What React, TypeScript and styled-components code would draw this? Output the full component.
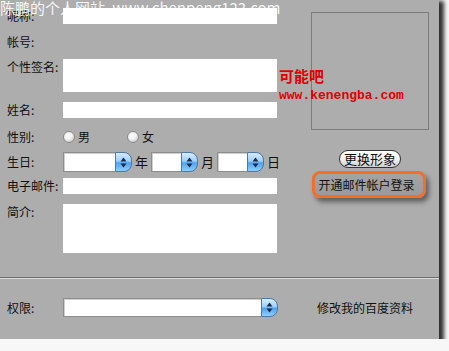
import styled, { createGlobalStyle } from 'styled-components';

const Global = createGlobalStyle`
  body {
    margin: 0;
    background: #f7f7f7;
  }
`;

const ArrowIcon = () => (
  <svg width="7" height="11" viewBox="0 0 7 11">
    <path d="M3.5 0.5 L6.5 4.5 H0.5 Z M3.5 10.5 L0.5 6.5 H6.5 Z" fill="#1a2a4a" />
  </svg>
);

const Select = ({ width, height }: { width: number; height: number }) => (
  <SelectBox style={{ width, height }}>
    <SelectField />
    <SelectButton>
      <ArrowIcon />
    </SelectButton>
  </SelectBox>
);

export default function App() {
  return (
    <>
      <Global />
      <Frame>
        <Watermark>陈鹏的个人网站 www.chenpeng123.com</Watermark>
        <Stamp>
          <StampTitle>可能吧</StampTitle>
          <StampUrl>www.kenengba.com</StampUrl>
        </Stamp>
        <Top>
          <Form>
            <Row $top={0}>
              <Label>昵称:</Label>
              <Field $h={16} />
            </Row>
            <Row $top={10}>
              <Label>帐号:</Label>
            </Row>
            <Row $top={9} $start>
              <Label>个性签名:</Label>
              <Field $h={33} />
            </Row>
            <Row $top={10}>
              <Label>姓名:</Label>
              <Field $h={16} />
            </Row>
            <Row $top={11}>
              <Label>性别:</Label>
              <Choice>
                <Radio />男
              </Choice>
              <Choice $gap={37}>
                <Radio />女
              </Choice>
            </Row>
            <Row $top={7}>
              <Label>生日:</Label>
              <Select width={69} height={20} />
              <Unit>年</Unit>
              <Select width={47} height={20} />
              <Unit>月</Unit>
              <Select width={47} height={20} />
              <Unit>日</Unit>
            </Row>
            <Row $top={6}>
              <Label>电子邮件:</Label>
              <Field $h={16} />
            </Row>
            <Row $top={10} $start>
              <Label>简介:</Label>
              <Field $h={49} />
            </Row>
          </Form>
          <Side>
            <AvatarBox />
            <PillButton>更换形象</PillButton>
            <Highlight>开通邮件帐户登录</Highlight>
          </Side>
        </Top>
        <Separator />
        <Bottom>
          <Label>权限:</Label>
          <Select width={215} height={19} />
          <EditLink>修改我的百度资料</EditLink>
        </Bottom>
      </Frame>
    </>
  );
}

const Frame = styled.div`
  position: relative;
  width: 439px;
  height: 339px;
  background: #adadad;
  box-shadow: 3px 3px 4px 2px rgba(0, 0, 0, 0.8);
  display: flex;
  flex-direction: column;
  font: 12px 'Noto Sans CJK SC', sans-serif;
  color: #111;
`;

const Watermark = styled.div`
  position: absolute;
  left: 0;
  top: -3px;
  z-index: 2;
  font: 15px 'Noto Sans CJK SC', sans-serif;
  color: rgba(255, 255, 255, 0.92);
  white-space: nowrap;
  word-spacing: 4px;
`;

const Stamp = styled.div`
  position: absolute;
  left: 279px;
  top: 66px;
  z-index: 2;
  color: #e00000;
`;

const StampTitle = styled.div`
  font: bold 15px 'Noto Sans CJK SC', serif;
  line-height: 20px;
`;

const StampUrl = styled.div`
  margin-top: 3px;
  font: bold 13px 'Liberation Mono', monospace;
  line-height: 14px;
`;

const Top = styled.div`
  display: flex;
  height: 277px;
`;

const Form = styled.div`
  width: 277px;
  padding-top: 8px;
  display: flex;
  flex-direction: column;
`;

const Row = styled.div<{ $top: number; $start?: boolean }>`
  display: flex;
  align-items: ${(p) => (p.$start ? 'flex-start' : 'center')};
  margin-top: ${(p) => p.$top}px;
  min-height: 16px;
`;

const Label = styled.div`
  flex: none;
  width: 63px;
  padding-left: 7px;
  box-sizing: border-box;
  line-height: 16px;
  white-space: nowrap;
`;

const Field = styled.div<{ $h: number }>`
  width: 214px;
  height: ${(p) => p.$h}px;
  background: #fff;
`;

const Choice = styled.div<{ $gap?: number }>`
  display: flex;
  align-items: center;
  gap: 3px;
  margin-left: ${(p) => p.$gap ?? 0}px;
  line-height: 16px;
`;

const Radio = styled.span`
  width: 12px;
  height: 12px;
  border-radius: 50%;
  box-sizing: border-box;
  border: 1px solid #8a8a8a;
  background: radial-gradient(circle at 40% 35%, #ffffff 0%, #eeeeee 45%, #b8b8b8 100%);
`;

const SelectBox = styled.div`
  display: flex;
  flex: none;
`;

const SelectField = styled.div`
  flex: 1;
  background: #fff;
  border: 1px solid #8d8d8d;
  border-right: none;
  box-shadow: inset 1px 1px 0 #d0d0d0;
`;

const SelectButton = styled.div`
  width: 15px;
  display: flex;
  align-items: center;
  justify-content: center;
  border: 1px solid #4a78b0;
  border-radius: 0 8px 8px 0;
  background: linear-gradient(180deg, #d6ecff 0%, #9cd0fb 45%, #4fa2ee 55%, #8cd0ff 100%);
`;

const Unit = styled.span`
  margin: 0 3px 0 3px;
  font-size: 13px;
  line-height: 16px;
`;

const Side = styled.div`
  width: 118px;
  margin-left: 34px;
  padding-top: 12px;
  display: flex;
  flex-direction: column;
  align-items: center;
`;

const AvatarBox = styled.div`
  width: 118px;
  height: 118px;
  box-sizing: border-box;
  border: 1px solid #7c7c7c;
`;

const PillButton = styled.div`
  margin-top: 20px;
  width: 62px;
  height: 18px;
  box-sizing: border-box;
  border: 1.5px solid #333;
  border-radius: 9px;
  background: linear-gradient(180deg, #ffffff 0%, #f2f2f2 50%, #cfcfcf 100%);
  display: flex;
  align-items: center;
  justify-content: center;
  font-size: 13px;
  line-height: 16px;
`;

const Highlight = styled.div`
  margin-top: 3px;
  margin-left: -3px;
  width: 114px;
  height: 27px;
  box-sizing: border-box;
  border: 3px solid #f06f2c;
  border-radius: 8px;
  background: linear-gradient(180deg, #a4a4a4 0%, #9a9a9a 100%);
  box-shadow: 3px 4px 5px rgba(0, 0, 0, 0.45);
  padding-left: 4px;
  display: flex;
  align-items: center;
  font-size: 12px;
  white-space: nowrap;
`;

const Separator = styled.div`
  height: 0;
  border-top: 1px solid #6e6e6e;
  border-bottom: 1px solid #dadada;
`;

const Bottom = styled.div`
  display: flex;
  align-items: center;
  padding-top: 19px;
`;

const EditLink = styled.span`
  margin-left: 39px;
  font-size: 12px;
  line-height: 16px;
`;
